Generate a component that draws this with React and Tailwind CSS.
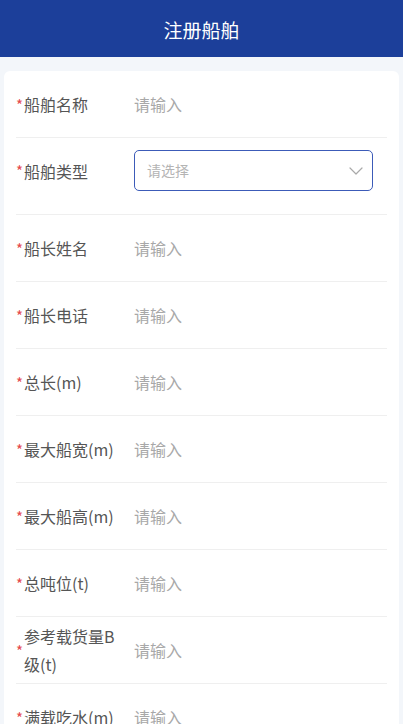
import React from 'react';

const fields = [
  { label: '船舶名称' },
  { label: '船舶类型', select: true },
  { label: '船长姓名' },
  { label: '船长电话' },
  { label: '总长(m)' },
  { label: '最大船宽(m)' },
  { label: '最大船高(m)' },
  { label: '总吨位(t)' },
  { label: '参考载货量B级(t)' },
  { label: '满载吃水(m)' },
  { label: '空载吃水(m)' },
];

const Chevron = () => (
  <svg width="14" height="8" viewBox="0 0 14 8" fill="none">
    <path d="M1 1l6 6 6-6" stroke="#a9a9a9" strokeWidth="1.2" strokeLinecap="round" strokeLinejoin="round" />
  </svg>
);

const Row = ({ field, last }) => {
  return (
    <div className={`flex items-center ${field.select ? 'pt-[12px] pb-[23px]' : 'h-[67px]'} ${last ? '' : 'border-b border-[#efefef]'}`}>
      <div className='w-[118px] shrink-0 flex items-center pr-[14px]'>
        <span className='w-[8px] shrink-0 text-[15px] leading-none text-[#e5484d]'>*</span>
        <span className='text-[16px] leading-[28px] text-[#555555]'>{field.label}</span>
      </div>
      {
        field.select ? (
          <div className='flex-1 mr-[14px] h-[41px] border-[1.5px] border-[#3c5bb8] rounded-[5px] flex items-center justify-between pl-[12px] pr-[9px]'>
            <span className='text-[14px] text-[#b4b4b4]'>请选择</span>
            <Chevron />
          </div>
        ) : (
          <span className='text-[16px] text-[#a8a8a8]'>请输入</span>
        )
      }
    </div>
  );
};

const App = () => {
  return (
    <div className='min-h-screen bg-[#f3f6fa]' style={{ fontFamily: '"Noto Sans CJK SC", "Noto Sans", sans-serif' }}>
      <div className='h-[57px] bg-[#1c3f9a] flex items-center justify-center pt-[4px]'>
        <h1 className='text-white text-[19px]'>注册船舶</h1>
      </div>
      <div className='mx-[4px] mt-[14px] bg-white rounded-[6px] px-[12px]'>
        {fields.map((f, i) => (
          <Row key={f.label} field={f} last={i === fields.length - 1} />
        ))}
      </div>
    </div>
  );
};

export default App;
